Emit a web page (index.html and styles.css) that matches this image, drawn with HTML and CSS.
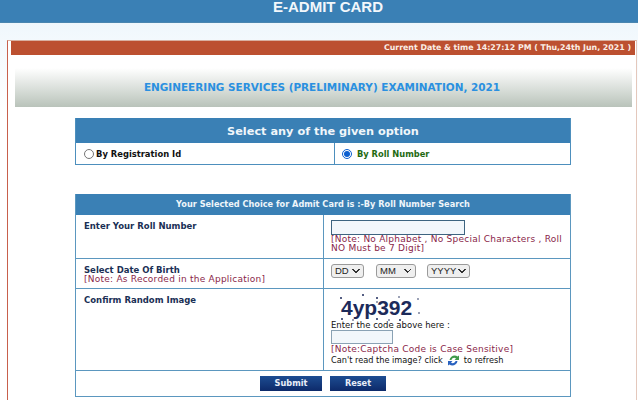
FILE: index.html
```html
<!DOCTYPE html>
<html lang="en">
<head>
<meta charset="utf-8">
<title>E-Admit Card</title>
<link rel="stylesheet" href="styles.css">
</head>
<body>
<header class="top">E-ADMIT CARD</header>
<main class="card">
  <div class="datebar">Current Date &amp; time 14:27:12 PM ( Thu,24th Jun, 2021 )</div>
  <h1 class="exam">ENGINEERING SERVICES (PRELIMINARY) EXAMINATION, 2021</h1>
  <section class="options">
    <h2 class="options-head">Select any of the given option</h2>
    <div class="options-row">
      <label class="opt opt-left"><input type="radio" name="by" class="radio"> By Registration Id</label>
      <label class="opt opt-right"><input type="radio" name="by" class="radio" checked> By Roll Number</label>
    </div>
  </section>
  <section class="form">
    <h2 class="form-head">Your Selected Choice for Admit Card is :-By Roll Number Search</h2>
    <div class="row row-roll">
      <div class="label"><b>Enter Your Roll Number</b></div>
      <div class="field">
        <input class="text-roll" type="text">
        <div class="note">[Note: No Alphabet , No Special Characters , Roll NO Must be 7 Digit]</div>
      </div>
    </div>
    <div class="row row-dob">
      <div class="label"><b>Select Date Of Birth</b><div class="note">[Note: As Recorded in the Application]</div></div>
      <div class="field selects">
        <select class="sel sel-d"><option>DD</option></select>
        <select class="sel sel-m"><option>MM</option></select>
        <select class="sel sel-y"><option>YYYY</option></select>
      </div>
    </div>
    <div class="row row-cap">
      <div class="label"><b>Confirm Random Image</b></div>
      <div class="field">
        <div class="captcha">
          <span class="captcha-text">4yp392</span>
          <svg class="captcha-dots" width="90" height="28" viewBox="0 0 90 28" aria-hidden="true">
            <g fill="#1c2a5a">
              <circle cx="7" cy="5" r="1"/><circle cx="29" cy="2" r="1"/><circle cx="43" cy="5" r="1"/><circle cx="43" cy="9" r=".8"/>
              <circle cx="65" cy="4" r=".8"/><circle cx="84" cy="6" r=".8"/><circle cx="85" cy="20" r=".8"/><circle cx="8" cy="26" r="1"/>
              <circle cx="19" cy="27" r=".8"/><circle cx="43" cy="26" r="1"/><circle cx="55" cy="27" r=".8"/><circle cx="66" cy="27" r="1"/><circle cx="75" cy="21" r=".8"/>
            </g>
          </svg>
        </div>
        <div class="plain">Enter the code above here :</div>
        <input class="text-cap" type="text">
        <div class="note note-cap">[Note:Captcha Code is Case Sensitive]</div>
        <div class="refresh">Can't read the image? click
          <svg class="refresh-icon" width="13" height="13" viewBox="0 0 13 13" aria-hidden="true">
            <path d="M2.500 6 C3 2 8 0 10.500 2.500 L12 1.500 V6 H7.500 L9 4.500 C7.500 3 5 4 4.500 6 Z" fill="#3f9a4a"/>
            <path d="M1 7 H5.500 L4 8.500 C5.500 10 8 9 8.500 7 H10.500 C10 11 5 13 2.500 10.500 L1 11.500 Z" fill="#2a62c0"/>
          </svg>
          to refresh</div>
      </div>
    </div>
    <div class="actions">
      <button class="btn btn-submit" type="button">Submit</button>
      <button class="btn btn-reset" type="button">Reset</button>
    </div>
  </section>
</main>
</body>
</html>
```
FILE: styles.css
```css
* { box-sizing: border-box; }
html, body { margin: 0; padding: 0; }
body {
  width: 638px;
  height: 400px;
  overflow: hidden;
  background: linear-gradient(#eaf5fc 0, #f3f9fd 40px, #ffffff 120px);
  font-family: "DejaVu Sans", Verdana, sans-serif;
  color: #111;
}
.top {
  height: 23px;
  background: #3a80b5;
  border-bottom: 1px solid #4a86b0;
  color: #f2f7fb;
  font: bold 15px/14px "Liberation Sans", Arial, sans-serif;
  text-align: center;
  padding-left: 18px;
}
.card {
  margin: 17px 0 0 7px;
  width: 630px;
  height: 380px;
  padding: 0 0 0 3px;
  background: #fff;
  border-top: 1px solid #d9b0a0;
  border-left: 1px solid #c8604c;
  border-right: 1px solid #e4c8bc;
}
.datebar {
  width: 624px;
  height: 14px;
  background: #bc5030;
  color: #fbeee6;
  font: bold 7.85px/14px "DejaVu Sans", Verdana, sans-serif;
  text-align: right;
  padding-right: 4px;
}
.exam {
  margin: 13px 0 0 4px;
  width: 617px;
  height: 39px;
  background: linear-gradient(#ffffff, #b9c3ba);
  color: #2a90e0;
  font: bold 10.45px/39px "DejaVu Sans", Verdana, sans-serif;
  text-align: center;
  padding-right: 3px;
}
.options {
  margin: 11px 0 0 64px;
  width: 496px;
  border: 1px solid #4d8fbd;
  border-top: 0;
}
.options-head {
  margin: 0;
  height: 25px;
  background: #3a80b5;
  color: #f0f6fa;
  font: bold 11.3px/27px "DejaVu Sans", Verdana, sans-serif;
  text-align: center;
}
.options-row {
  display: grid;
  grid-template-columns: 258px 1fr;
  height: 21px;
}
.opt {
  display: flex;
  align-items: center;
  gap: 2px;
  font: bold 8.4px/1 "DejaVu Sans", Verdana, sans-serif;
  padding: 1px 0 0 8px;
}
.opt-right { border-left: 1px solid #4d8fbd; color: #1f6a12; padding-left: 7px; gap: 5px; font-size: 8.3px; }
.radio { width: 10px; height: 10px; margin: 0; accent-color: #0b5fd0; }
.form {
  margin: 29px 0 0 64px;
  width: 496px;
  border: 1px solid #5b97bf;
  border-top: 0;
}
.form-head {
  margin: 0;
  height: 21px;
  background: #3a80b5;
  color: #eef5fa;
  font: bold 8.2px/21px "DejaVu Sans", Verdana, sans-serif;
  text-align: center;
}
.row {
  display: grid;
  grid-template-columns: 248px 1fr;
  border-bottom: 1px solid #5b97bf;
}
.row-roll { height: 44px; }
.row-dob { height: 30px; }
.row-cap { height: 82px; }
.label {
  padding: 7px 0 0 8px;
  color: #1a2f55;
  font-size: 8.5px;
  line-height: 9px;
  border-right: 1px solid #5b97bf;
}
.note {
  color: #8a1f4a;
  font-size: 9px;
  line-height: 9px;
  letter-spacing: 0.24px;
  font-weight: normal;
}
.field { padding: 5px 4px 0 7px; }
.text-roll {
  display: block;
  width: 134px;
  height: 15px;
  margin: 0;
  padding: 0;
  background: #f2f7fb;
  border: 1px solid #3d6480;
  border-radius: 0;
}
.selects { display: flex; gap: 12px; padding-top: 5px; align-items: flex-start; }
.sel {
  appearance: none;
  height: 14px;
  padding: 0 0 0 3px;
  font: 9.5px/12px "Liberation Sans", Arial, sans-serif;
  color: #222;
  border: 1px solid #9a9a9a;
  border-radius: 3px;
  background-color: #efefef;
  background-image:
    linear-gradient(45deg, transparent 50%, #333 50%, #333 65%, transparent 65%),
    linear-gradient(-45deg, transparent 50%, #333 50%, #333 65%, transparent 65%);
  background-size: 4px 4px, 4px 4px;
  background-repeat: no-repeat;
  background-position: right 7px top 4px, right 3px top 4px;
}
.sel-d { width: 33px; }
.sel-m { width: 40px; }
.sel-y { width: 43px; margin-left: -1px; }
.captcha { position: relative; height: 27px; width: 90px; margin: -1px 0 0 3px; }
.captcha-text {
  display: block;
  padding-left: 7px;
  font: bold 21px/30px "Liberation Sans", Arial, sans-serif;
  color: #1c2a5a;
}
.captcha-dots { position: absolute; left: 0; top: 0; }
.plain { font-size: 8.5px; line-height: 9px; color: #111; margin-top: 1px; }
.text-cap {
  display: block;
  width: 62px;
  height: 14px;
  margin: 0;
  padding: 0;
  background: #f2f7fb;
  border: 1px solid #8aa2b4;
  border-radius: 0;
}
.note-cap { line-height: 10px; }
.refresh {
  display: flex;
  align-items: center;
  gap: 4px;
  font-size: 8.2px;
  line-height: 13px;
  color: #111;
}
.refresh-icon { flex: none; }
.actions {
  display: flex;
  justify-content: center;
  gap: 8px;
  padding-top: 5px;
  height: 25px;
}
.btn {
  height: 15px;
  padding: 0;
  border: 0;
  background: linear-gradient(#1d4d92, #0d2a6a);
  color: #e8eef8;
  font: bold 8.2px/15px "DejaVu Sans", Verdana, sans-serif;
}
.btn-submit { width: 62px; }
.btn-reset { width: 56px; }
```
